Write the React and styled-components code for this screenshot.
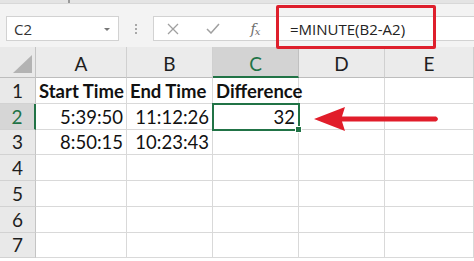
import React from 'react';
import styled, { createGlobalStyle } from 'styled-components';

const Global = createGlobalStyle`
    html, body {
        margin: 0;
        padding: 0;
        background: #ffffff;
    }
`;

const Page = styled.div`
    position: relative;
    width: 474px;
    height: 261px;
    overflow: hidden;
    background: #ffffff;
    font-family: "Lato", "Noto Sans", sans-serif;
`;

const TopStrip = styled.div`
    height: 4px;
    background: #e4e4e4;
    border-bottom: 1px solid #d8d8d8;
    box-sizing: border-box;
    padding-left: 68px;
    .tick {
        display: block;
        width: 2px;
        height: 3px;
        background: #9a9a9a;
    }
`;

const Toolbar = styled.div`
    height: 43px;
    background: #f3f3f3;
    display: flex;
    align-items: flex-start;
    padding: 12px 0 0 6px;
    box-sizing: border-box;
`;

const NameBox = styled.div`
    width: 113px;
    height: 25px;
    box-sizing: border-box;
    background: #ffffff;
    border: 1px solid #d2d2d2;
    display: flex;
    align-items: center;
    justify-content: space-between;
    padding: 0 8px 0 7px;
    font-family: "Open Sans", sans-serif;
    font-size: 15px;
    color: #333333;
`;

const Caret = styled.span`
    width: 0;
    height: 0;
    border-left: 3px solid transparent;
    border-right: 3px solid transparent;
    border-top: 3px solid #777777;
    margin-top: 1px;
`;

const Grip = styled.div`
    width: 34px;
    height: 25px;
    display: flex;
    flex-direction: column;
    align-items: center;
    justify-content: center;
    gap: 2px;
    span {
        width: 2px;
        height: 2px;
        background: #a8a8a8;
    }
`;

const FormulaBar = styled.div`
    flex: 1;
    height: 25px;
    box-sizing: border-box;
    background: #ffffff;
    border: 1px solid #d2d2d2;
    border-right: none;
    display: flex;
    align-items: center;
`;

const BarIcon = styled.div`
    width: ${p => p.$w}px;
    display: flex;
    justify-content: center;
    align-items: center;
    color: #8a8a8a;
`;

const Fx = styled.span`
    font-family: "DejaVu Serif", "Liberation Serif", serif;
    font-style: italic;
    font-size: 14px;
    color: #6e6e6e;
    letter-spacing: -1px;
    sub {
        font-size: 10px;
        vertical-align: -1px;
    }
`;

const Formula = styled.div`
    padding-left: 14px;
    font-family: "Open Sans", sans-serif;
    font-size: 15px;
    color: #222222;
    white-space: nowrap;
`;

const Sheet = styled.div`
    display: grid;
    grid-template-columns: 36px 91px 86px 86px 86px 89px;
    grid-template-rows: 31px repeat(7, 25.75px);
`;

const Corner = styled.div`
    background: #e9e9e9;
    border-right: 1px solid #c4c4c4;
    border-bottom: 1px solid #bdbdbd;
    display: flex;
    align-items: flex-end;
    justify-content: flex-end;
    padding: 0 3px 4px 0;
    svg {
        display: block;
    }
`;

const ColHead = styled.div`
    background: ${p => (p.$active ? '#d3d3d3' : '#ebebeb')};
    border-right: 1px solid ${p => (p.$active ? '#c0c0c0' : '#d0d0d0')};
    border-bottom: ${p => (p.$active ? '2px solid #217346' : '1px solid #bdbdbd')};
    box-sizing: border-box;
    display: flex;
    align-items: center;
    justify-content: center;
    padding-top: 3px;
    font-size: 19px;
    color: ${p => (p.$active ? '#217346' : '#1e1e1e')};
`;

const RowHead = styled.div`
    background: ${p => (p.$active ? '#d6d6d6' : '#e9e9e9')};
    border-right: ${p => (p.$active ? '2px solid #217346' : '1px solid #c4c4c4')};
    border-bottom: 1px solid #d2d2d2;
    box-sizing: border-box;
    display: flex;
    align-items: center;
    justify-content: center;
    font-size: 19px;
    color: ${p => (p.$active ? '#217346' : '#1e1e1e')};
`;

const Cell = styled.div`
    position: relative;
    box-sizing: border-box;
    border-right: 1px solid #d9d9d9;
    border-bottom: 1px solid #d9d9d9;
    display: flex;
    align-items: center;
    justify-content: ${p => (p.$right ? 'flex-end' : 'flex-start')};
    padding: 1px 3px 0 3px;
    font-size: 18.5px;
    font-weight: ${p => (p.$bold ? 700 : 400)};
    color: #111111;
    white-space: nowrap;
    overflow: visible;
    ${p => p.$selected && `
        outline: 2px solid #217346;
        outline-offset: -1px;
        z-index: 1;
    `}
`;

const Handle = styled.span`
    position: absolute;
    right: -4px;
    bottom: -4px;
    width: 5px;
    height: 5px;
    background: #217346;
    border: 1px solid #ffffff;
`;

const RedBox = styled.div`
    position: absolute;
    left: 276px;
    top: 5px;
    width: 160px;
    height: 44px;
    box-sizing: border-box;
    border: 3px solid #de1f2c;
    border-radius: 2px;
`;

const Arrow = styled.svg`
    position: absolute;
    left: 312px;
    top: 104px;
`;

const columns = ['A', 'B', 'C', 'D', 'E'];

const rows = [
    [{ v: 'Start Time', bold: true }, { v: 'End Time', bold: true }, { v: 'Difference', bold: true }, {}, {}],
    [{ v: '5:39:50', right: true }, { v: '11:12:26', right: true }, { v: '32', right: true, selected: true }, {}, {}],
    [{ v: '8:50:15', right: true }, { v: '10:23:43', right: true }, {}, {}, {}],
    [{}, {}, {}, {}, {}],
    [{}, {}, {}, {}, {}],
    [{}, {}, {}, {}, {}],
    [{}, {}, {}, {}, {}],
];

const App = () => {
    return (
        <Page>
            <Global />
            <TopStrip><span className="tick" /></TopStrip>
            <Toolbar>
                <NameBox>C2<Caret /></NameBox>
                <Grip><span /><span /><span /></Grip>
                <FormulaBar>
                    <BarIcon $w={38}>
                        <svg width="12" height="12" viewBox="0 0 12 12">
                            <path d="M1 1 L11 11 M11 1 L1 11" stroke="#a0a0a0" strokeWidth="1.3" fill="none" />
                        </svg>
                    </BarIcon>
                    <BarIcon $w={42}>
                        <svg width="14" height="11" viewBox="0 0 14 11">
                            <path d="M1 6 L5 10 L13 1" stroke="#a0a0a0" strokeWidth="1.5" fill="none" />
                        </svg>
                    </BarIcon>
                    <BarIcon $w={42}>
                        <Fx>f<sub>x</sub></Fx>
                    </BarIcon>
                    <Formula>=MINUTE(B2-A2)</Formula>
                </FormulaBar>
            </Toolbar>
            <Sheet>
                <Corner>
                    <svg width="19" height="18" viewBox="0 0 19 18">
                        <path d="M19 0 L19 18 L0 18 Z" fill="#b3b3b3" />
                    </svg>
                </Corner>
                {columns.map(c => (
                    <ColHead key={c} $active={c === 'C'}>{c}</ColHead>
                ))}
                {rows.map((row, i) => (
                    <React.Fragment key={i}>
                        <RowHead $active={i === 1}>{i + 1}</RowHead>
                        {row.map((cell, j) => (
                            <Cell key={j} $bold={cell.bold} $right={cell.right} $selected={cell.selected}>
                                {cell.v}
                                {cell.selected && <Handle />}
                            </Cell>
                        ))}
                    </React.Fragment>
                ))}
            </Sheet>
            <RedBox />
            <Arrow width="130" height="30" viewBox="0 0 130 30">
                <path d="M2 15 L33 3 L30 12.5 L124 12.5 Q128 15 124 17.5 L30 17.5 L33 27 Z" fill="#e11d2a" />
            </Arrow>
        </Page>
    );
};

export default App;
